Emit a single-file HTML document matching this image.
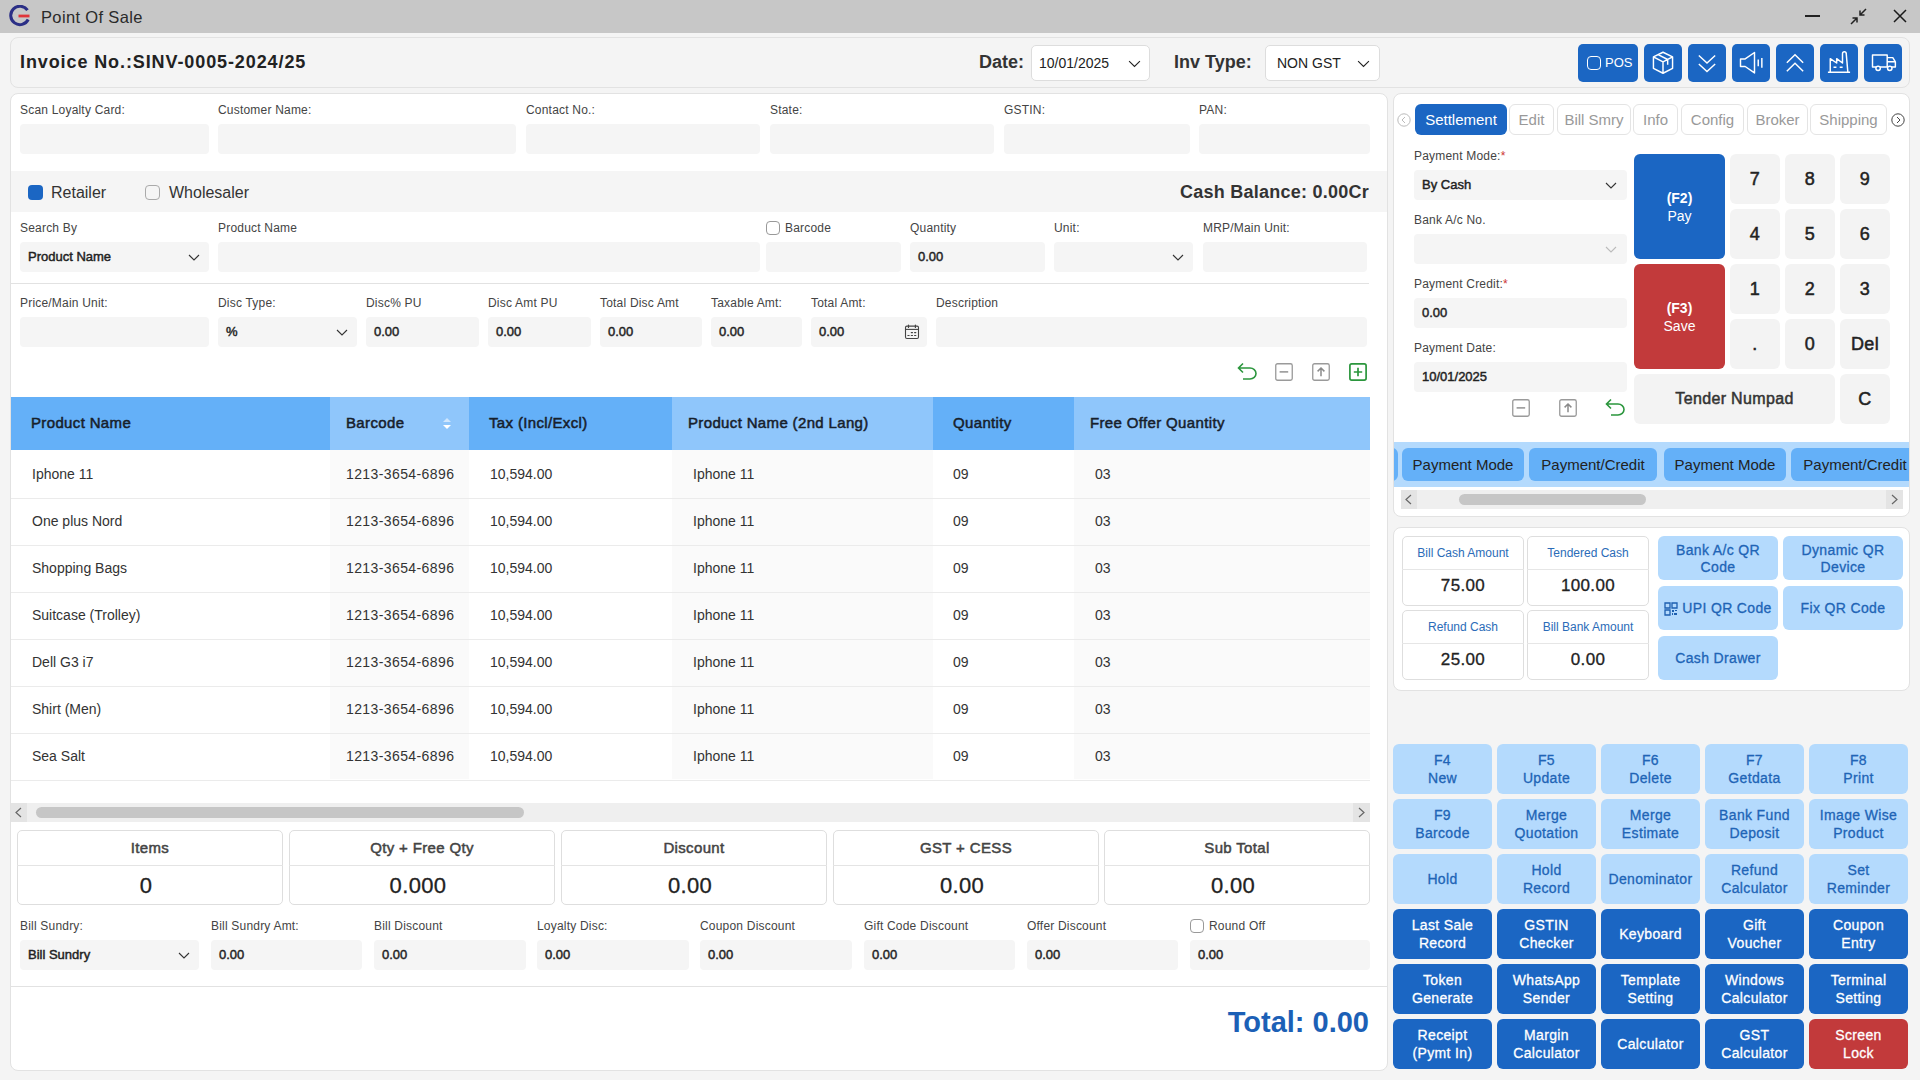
<!DOCTYPE html><html><head><meta charset="utf-8"><style>
html,body{margin:0;padding:0;width:1920px;height:1080px;overflow:hidden;background:#f4f4f4;font-family:"Liberation Sans",sans-serif;}
.t{position:absolute;height:40px;line-height:40px;white-space:nowrap;}
.m{font-weight:400 !important;-webkit-text-stroke:0.3px currentColor;letter-spacing:0.35px;}
.sb{font-weight:400 !important;-webkit-text-stroke:0.5px currentColor;letter-spacing:0.35px;}
.iv{font-weight:400 !important;-webkit-text-stroke:0.45px currentColor;letter-spacing:0;}
.ctr{display:flex;align-items:center;justify-content:center;text-align:center;}
</style></head><body>
<div style="position:absolute;left:0px;top:0px;width:1920px;height:33px;background:#c7c7c7;"></div>
<svg style="position:absolute;left:8px;top:5px" width="24" height="22" viewBox="0 0 24 22">
<path d="M19.5 5.2 A9.2 9.2 0 1 0 20.2 14.5" fill="none" stroke="#2b2f86" stroke-width="3"/>
<path d="M10.5 11 H21.5" stroke="#e0353a" stroke-width="2.8"/></svg>
<div class="t " style="left:41px;top:-3.5px;font-size:16.5px;font-weight:400;color:#2a2a2a;letter-spacing:0.35px;">Point Of Sale</div>
<div style="position:absolute;left:1805px;top:15px;width:15px;height:2px;background:#222;"></div>
<svg style="position:absolute;left:1850px;top:8px" width="17" height="17" viewBox="0 0 17 17">
<path d="M16 1 L10 7 M10 2.5 V7 H14.5 M1 16 L7 10 M2.5 10 H7 V14.5" fill="none" stroke="#222" stroke-width="1.5"/></svg>
<svg style="position:absolute;left:1893px;top:9px" width="14" height="14" viewBox="0 0 14 14">
<path d="M1 1 L13 13 M13 1 L1 13" fill="none" stroke="#1a1a1a" stroke-width="1.5"/></svg>
<div style="position:absolute;left:10px;top:37px;width:1900px;height:51px;box-sizing:border-box;background:#f4f4f4;border:1px solid #e2e2e2;border-radius:8px;"></div>
<div class="t " style="left:20px;top:42px;font-size:18px;font-weight:700;color:#222;letter-spacing:0.9px;">Invoice No.:SINV-0005-2024/25</div>
<div class="t " style="left:979px;top:42px;font-size:18px;font-weight:700;color:#333;">Date:</div>
<div style="position:absolute;left:1031px;top:45px;width:119px;height:36px;box-sizing:border-box;background:#fff;border:1px solid #ddd;border-radius:5px;"></div>
<div class="t " style="left:1039px;top:43px;font-size:14px;font-weight:400;color:#222;">10/01/2025</div>
<svg style="position:absolute;left:1128px;top:60px" width="13" height="7.6" viewBox="0 0 12 7" preserveAspectRatio="none"><path d="M1 1 L6 6 L11 1" fill="none" stroke="#222" stroke-width="1.1" vector-effect="non-scaling-stroke"/></svg>
<div class="t " style="left:1174px;top:42px;font-size:18px;font-weight:700;color:#333;">Inv Type:</div>
<div style="position:absolute;left:1265px;top:45px;width:115px;height:36px;box-sizing:border-box;background:#fff;border:1px solid #ddd;border-radius:5px;"></div>
<div class="t " style="left:1277px;top:43px;font-size:14px;font-weight:400;color:#222;">NON GST</div>
<svg style="position:absolute;left:1357px;top:60px" width="13" height="7.6" viewBox="0 0 12 7" preserveAspectRatio="none"><path d="M1 1 L6 6 L11 1" fill="none" stroke="#222" stroke-width="1.1" vector-effect="non-scaling-stroke"/></svg>
<div style="position:absolute;left:1578px;top:44px;width:60px;height:38px;background:#1b66c3;border-radius:5px;"></div>
<div style="position:absolute;left:1587px;top:56px;width:14px;height:14px;box-sizing:border-box;border:1.5px solid #fff;border-radius:4px;"></div>
<div class="t " style="left:1605px;top:43px;font-size:13px;font-weight:400;color:#fff;">POS</div>
<div style="position:absolute;left:1644px;top:44px;width:38px;height:38px;background:#1b66c3;border-radius:5px;"></div>
<svg style="position:absolute;left:1649px;top:49px" width="28" height="28" viewBox="0 0 24 24"><path d="M12 2.8 L20.2 6.8 V16.6 L12 20.8 L3.8 16.6 V6.8 Z M3.8 6.8 L12 11 L20.2 6.8 M12 11 V20.8 M7.8 4.8 L16 9 V13.5" fill="none" stroke="#fff" stroke-width="1.25" stroke-linejoin="round"/></svg>
<div style="position:absolute;left:1688px;top:44px;width:38px;height:38px;background:#1b66c3;border-radius:5px;"></div>
<svg style="position:absolute;left:1693px;top:49px" width="28" height="28" viewBox="0 0 24 24"><path d="M5 5.5 L12 12 L19 5.5 M5 12.8 L12 19.3 L19 12.8" fill="none" stroke="#fff" stroke-width="1.25"/></svg>
<div style="position:absolute;left:1732px;top:44px;width:38px;height:38px;background:#1b66c3;border-radius:5px;"></div>
<svg style="position:absolute;left:1737px;top:49px" width="28" height="28" viewBox="0 0 24 24"><path d="M3 8.5 H7 L15 3 V20.5 L7 15 H3 Z M18.2 9 V14.8 M21.3 7.8 V16" fill="none" stroke="#fff" stroke-width="1.25" stroke-linejoin="round"/></svg>
<div style="position:absolute;left:1776px;top:44px;width:38px;height:38px;background:#1b66c3;border-radius:5px;"></div>
<svg style="position:absolute;left:1781px;top:49px" width="28" height="28" viewBox="0 0 24 24"><path d="M5 11.8 L12 5 L19 11.8 M5 19 L12 12.2 L19 19" fill="none" stroke="#fff" stroke-width="1.25"/></svg>
<div style="position:absolute;left:1820px;top:44px;width:38px;height:38px;background:#1b66c3;border-radius:5px;"></div>
<svg style="position:absolute;left:1825px;top:49px" width="28" height="28" viewBox="0 0 24 24"><path d="M2.5 20 H21.5 M4.5 20 V8.3 L10 12 V8.3 L15 12 V4 Q15 2.4 16.6 2.4 Q18.2 2.4 18.2 4 L19.6 20 M7.3 15.6 H9.8 M12.6 15.6 H15.1" fill="none" stroke="#fff" stroke-width="1.25" stroke-linejoin="round"/></svg>
<div style="position:absolute;left:1864px;top:44px;width:38px;height:38px;background:#1b66c3;border-radius:5px;"></div>
<svg style="position:absolute;left:1869px;top:49px" width="28" height="28" viewBox="0 0 24 24"><path d="M3 5.2 H15.6 V15.4 H3 Z M15.6 7.4 H20.4 L22.6 11 V15.4 H15.6 M15.6 11 H22.6" fill="none" stroke="#fff" stroke-width="1.25" stroke-linejoin="round"/><circle cx="7.8" cy="16.6" r="1.9" fill="#1b66c3" stroke="#fff" stroke-width="1.25"/><circle cx="17.8" cy="16.6" r="1.9" fill="#1b66c3" stroke="#fff" stroke-width="1.25"/></svg>
<div style="position:absolute;left:10px;top:93px;width:1378px;height:978px;box-sizing:border-box;background:#fff;border:1px solid #e2e2e2;border-radius:8px;"></div>
<div class="t " style="left:20px;top:90px;font-size:12px;font-weight:400;color:#444;letter-spacing:0.2px;">Scan Loyalty Card:</div>
<div style="position:absolute;left:20px;top:124px;width:189px;height:30px;background:#f5f5f5;border-radius:4px;"></div>
<div class="t " style="left:218px;top:90px;font-size:12px;font-weight:400;color:#444;letter-spacing:0.2px;">Customer Name:</div>
<div style="position:absolute;left:218px;top:124px;width:298px;height:30px;background:#f5f5f5;border-radius:4px;"></div>
<div class="t " style="left:526px;top:90px;font-size:12px;font-weight:400;color:#444;letter-spacing:0.2px;">Contact No.:</div>
<div style="position:absolute;left:526px;top:124px;width:234px;height:30px;background:#f5f5f5;border-radius:4px;"></div>
<div class="t " style="left:770px;top:90px;font-size:12px;font-weight:400;color:#444;letter-spacing:0.2px;">State:</div>
<div style="position:absolute;left:770px;top:124px;width:224px;height:30px;background:#f5f5f5;border-radius:4px;"></div>
<div class="t " style="left:1004px;top:90px;font-size:12px;font-weight:400;color:#444;letter-spacing:0.2px;">GSTIN:</div>
<div style="position:absolute;left:1004px;top:124px;width:186px;height:30px;background:#f5f5f5;border-radius:4px;"></div>
<div class="t " style="left:1199px;top:90px;font-size:12px;font-weight:400;color:#444;letter-spacing:0.2px;">PAN:</div>
<div style="position:absolute;left:1199px;top:124px;width:171px;height:30px;background:#f5f5f5;border-radius:4px;"></div>
<div style="position:absolute;left:11px;top:171px;width:1376px;height:41px;background:#f5f5f5;"></div>
<div style="position:absolute;left:28px;top:185px;width:15px;height:15px;background:#1b66c3;border-radius:4px;"></div>
<div class="t " style="left:51px;top:173px;font-size:16px;font-weight:400;color:#333;">Retailer</div>
<div style="position:absolute;left:145px;top:185px;width:15px;height:15px;box-sizing:border-box;background:transparent;border:1px solid #aaa;border-radius:4px;"></div>
<div class="t " style="left:169px;top:173px;font-size:16px;font-weight:400;color:#333;">Wholesaler</div>
<div class="t" style="right:551px;top:172px;font-size:18px;font-weight:700;color:#333;letter-spacing:0.25px;">Cash Balance: 0.00Cr</div>
<div class="t " style="left:20px;top:208px;font-size:12px;font-weight:400;color:#444;letter-spacing:0.2px;">Search By</div>
<div style="position:absolute;left:20px;top:242px;width:189px;height:30px;background:#f5f5f5;border-radius:4px;"></div>
<div class="t iv" style="left:28px;top:237.0px;font-size:13px;font-weight:700;color:#222;">Product Name</div>
<svg style="position:absolute;left:188px;top:254px" width="12" height="7.0" viewBox="0 0 12 7" preserveAspectRatio="none"><path d="M1 1 L6 6 L11 1" fill="none" stroke="#333" stroke-width="1.1" vector-effect="non-scaling-stroke"/></svg>
<div class="t " style="left:218px;top:208px;font-size:12px;font-weight:400;color:#444;letter-spacing:0.2px;">Product Name</div>
<div style="position:absolute;left:218px;top:242px;width:542px;height:30px;background:#f5f5f5;border-radius:4px;"></div>
<div style="position:absolute;left:766px;top:221px;width:14px;height:14px;box-sizing:border-box;background:#fff;border:1px solid #999;border-radius:4px;"></div>
<div class="t " style="left:785px;top:208px;font-size:12px;font-weight:400;color:#444;letter-spacing:0.2px;">Barcode</div>
<div style="position:absolute;left:766px;top:242px;width:135px;height:30px;background:#f5f5f5;border-radius:4px;"></div>
<div class="t " style="left:910px;top:208px;font-size:12px;font-weight:400;color:#444;letter-spacing:0.2px;">Quantity</div>
<div style="position:absolute;left:910px;top:242px;width:135px;height:30px;background:#f5f5f5;border-radius:4px;"></div>
<div class="t iv" style="left:918px;top:237.0px;font-size:13px;font-weight:700;color:#222;">0.00</div>
<div class="t " style="left:1054px;top:208px;font-size:12px;font-weight:400;color:#444;letter-spacing:0.2px;">Unit:</div>
<div style="position:absolute;left:1054px;top:242px;width:139px;height:30px;background:#f5f5f5;border-radius:4px;"></div>
<svg style="position:absolute;left:1172px;top:254px" width="12" height="7.0" viewBox="0 0 12 7" preserveAspectRatio="none"><path d="M1 1 L6 6 L11 1" fill="none" stroke="#333" stroke-width="1.1" vector-effect="non-scaling-stroke"/></svg>
<div class="t " style="left:1203px;top:208px;font-size:12px;font-weight:400;color:#444;letter-spacing:0.2px;">MRP/Main Unit:</div>
<div style="position:absolute;left:1203px;top:242px;width:164px;height:30px;background:#f5f5f5;border-radius:4px;"></div>
<div style="position:absolute;left:10px;top:283px;width:1359px;height:1px;background:#e2e2e2;"></div>
<div class="t " style="left:20px;top:283px;font-size:12px;font-weight:400;color:#444;letter-spacing:0.2px;">Price/Main Unit:</div>
<div style="position:absolute;left:20px;top:317px;width:189px;height:30px;background:#f5f5f5;border-radius:4px;"></div>
<div class="t " style="left:218px;top:283px;font-size:12px;font-weight:400;color:#444;letter-spacing:0.2px;">Disc Type:</div>
<div style="position:absolute;left:218px;top:317px;width:139px;height:30px;background:#f5f5f5;border-radius:4px;"></div>
<div class="t iv" style="left:226px;top:312.0px;font-size:13px;font-weight:700;color:#222;">%</div>
<div class="t " style="left:366px;top:283px;font-size:12px;font-weight:400;color:#444;letter-spacing:0.2px;">Disc% PU</div>
<div style="position:absolute;left:366px;top:317px;width:113px;height:30px;background:#f5f5f5;border-radius:4px;"></div>
<div class="t iv" style="left:374px;top:312.0px;font-size:13px;font-weight:700;color:#222;">0.00</div>
<div class="t " style="left:488px;top:283px;font-size:12px;font-weight:400;color:#444;letter-spacing:0.2px;">Disc Amt PU</div>
<div style="position:absolute;left:488px;top:317px;width:103px;height:30px;background:#f5f5f5;border-radius:4px;"></div>
<div class="t iv" style="left:496px;top:312.0px;font-size:13px;font-weight:700;color:#222;">0.00</div>
<div class="t " style="left:600px;top:283px;font-size:12px;font-weight:400;color:#444;letter-spacing:0.2px;">Total Disc Amt</div>
<div style="position:absolute;left:600px;top:317px;width:102px;height:30px;background:#f5f5f5;border-radius:4px;"></div>
<div class="t iv" style="left:608px;top:312.0px;font-size:13px;font-weight:700;color:#222;">0.00</div>
<div class="t " style="left:711px;top:283px;font-size:12px;font-weight:400;color:#444;letter-spacing:0.2px;">Taxable Amt:</div>
<div style="position:absolute;left:711px;top:317px;width:91px;height:30px;background:#f5f5f5;border-radius:4px;"></div>
<div class="t iv" style="left:719px;top:312.0px;font-size:13px;font-weight:700;color:#222;">0.00</div>
<div class="t " style="left:811px;top:283px;font-size:12px;font-weight:400;color:#444;letter-spacing:0.2px;">Total Amt:</div>
<div style="position:absolute;left:811px;top:317px;width:116px;height:30px;background:#f5f5f5;border-radius:4px;"></div>
<div class="t iv" style="left:819px;top:312.0px;font-size:13px;font-weight:700;color:#222;">0.00</div>
<div class="t " style="left:936px;top:283px;font-size:12px;font-weight:400;color:#444;letter-spacing:0.2px;">Description</div>
<div style="position:absolute;left:936px;top:317px;width:431px;height:30px;background:#f5f5f5;border-radius:4px;"></div>
<svg style="position:absolute;left:336px;top:329px" width="12" height="7.0" viewBox="0 0 12 7" preserveAspectRatio="none"><path d="M1 1 L6 6 L11 1" fill="none" stroke="#333" stroke-width="1.1" vector-effect="non-scaling-stroke"/></svg>
<svg style="position:absolute;left:904px;top:324px" width="16" height="16" viewBox="0 0 16 16">
<rect x="1.5" y="2.1" width="13" height="12.4" rx="1.4" fill="none" stroke="#444" stroke-width="1.1"/>
<path d="M1.5 5.4 H14.5" stroke="#444" stroke-width="1.1"/><path d="M4.5 1 V3.4 M11.4 1 V3.4" stroke="#444" stroke-width="1.2" stroke-linecap="round"/>
<path d="M7.3 8.6 H8.5 M10.6 8.6 H11.8 M3.9 11.5 H5.1 M7.3 11.5 H8.5 M10.6 11.5 H11.8" stroke="#444" stroke-width="1.2" stroke-linecap="round"/></svg>
<svg style="position:absolute;left:1237px;top:362px" width="21" height="18" viewBox="0 0 21 18">
<path d="M6 1.5 L1.5 6 L6 10.5 M1.5 6 H13 A6 5.5 0 0 1 13 17 H6" fill="none" stroke="#2b963d" stroke-width="1.6"/></svg>
<svg style="position:absolute;left:1275px;top:363px" width="18" height="18" viewBox="0 0 18 18">
<rect x="0.75" y="0.75" width="16.5" height="16.5" rx="1.8" fill="none" stroke="#9a9a9a" stroke-width="1.3"/><path d="M4.6 8.9 H13.2" stroke="#8a8a8a" stroke-width="1.4"/></svg>
<svg style="position:absolute;left:1312px;top:363px" width="18" height="18" viewBox="0 0 18 18">
<rect x="0.75" y="0.75" width="16.5" height="16.5" rx="1.8" fill="none" stroke="#9a9a9a" stroke-width="1.3"/><path d="M9 13.2 V5 M5.6 8.4 L9 5 L12.4 8.4" fill="none" stroke="#8a8a8a" stroke-width="1.5"/></svg>
<svg style="position:absolute;left:1349px;top:363px" width="18" height="18" viewBox="0 0 18 18">
<rect x="0.9" y="0.9" width="16.2" height="16.2" rx="1.8" fill="none" stroke="#2b963d" stroke-width="1.7"/><path d="M4.8 9 H13.2 M9 4.8 V13.2" stroke="#2b963d" stroke-width="1.7"/></svg>
<div style="position:absolute;left:11px;top:397px;width:319px;height:53px;background:#64b0f8;"></div>
<div class="t sb" style="left:31px;top:403px;font-size:15px;font-weight:700;color:#17202b;">Product Name</div>
<div style="position:absolute;left:330px;top:397px;width:139px;height:53px;background:#8fc6fb;"></div>
<div class="t sb" style="left:346px;top:403px;font-size:15px;font-weight:700;color:#17202b;">Barcode</div>
<div style="position:absolute;left:469px;top:397px;width:203px;height:53px;background:#64b0f8;"></div>
<div class="t sb" style="left:489px;top:403px;font-size:15px;font-weight:700;color:#17202b;">Tax (Incl/Excl)</div>
<div style="position:absolute;left:672px;top:397px;width:261px;height:53px;background:#8fc6fb;"></div>
<div class="t sb" style="left:688px;top:403px;font-size:15px;font-weight:700;color:#17202b;">Product Name (2nd Lang)</div>
<div style="position:absolute;left:933px;top:397px;width:141px;height:53px;background:#64b0f8;"></div>
<div class="t sb" style="left:953px;top:403px;font-size:15px;font-weight:700;color:#17202b;">Quantity</div>
<div style="position:absolute;left:1074px;top:397px;width:296px;height:53px;background:#8fc6fb;"></div>
<div class="t sb" style="left:1090px;top:403px;font-size:15px;font-weight:700;color:#17202b;">Free Offer Quantity</div>
<svg style="position:absolute;left:442px;top:417px" width="10" height="13" viewBox="0 0 10 13">
<path d="M1 5 L5 1 L9 5 Z" fill="#cfe6fd"/><path d="M1 8 L5 12 L9 8 Z" fill="#fff"/></svg>
<div style="position:absolute;left:11px;top:450px;width:319px;height:47px;background:#fff;"></div>
<div style="position:absolute;left:330px;top:450px;width:139px;height:47px;background:#fafafa;"></div>
<div style="position:absolute;left:469px;top:450px;width:203px;height:47px;background:#fff;"></div>
<div style="position:absolute;left:672px;top:450px;width:261px;height:47px;background:#fafafa;"></div>
<div style="position:absolute;left:933px;top:450px;width:141px;height:47px;background:#fff;"></div>
<div style="position:absolute;left:1074px;top:450px;width:296px;height:47px;background:#fafafa;"></div>
<div class="t " style="left:32px;top:454px;font-size:14px;font-weight:400;color:#333;">Iphone 11</div>
<div class="t " style="left:346px;top:454px;font-size:14px;font-weight:400;color:#333;letter-spacing:0.4px;">1213-3654-6896</div>
<div class="t " style="left:490px;top:454px;font-size:14px;font-weight:400;color:#333;">10,594.00</div>
<div class="t " style="left:693px;top:454px;font-size:14px;font-weight:400;color:#333;">Iphone 11</div>
<div class="t " style="left:953px;top:454px;font-size:14px;font-weight:400;color:#333;">09</div>
<div class="t " style="left:1095px;top:454px;font-size:14px;font-weight:400;color:#333;">03</div>
<div style="position:absolute;left:11px;top:497px;width:319px;height:47px;background:#fff;"></div>
<div style="position:absolute;left:330px;top:497px;width:139px;height:47px;background:#fafafa;"></div>
<div style="position:absolute;left:469px;top:497px;width:203px;height:47px;background:#fff;"></div>
<div style="position:absolute;left:672px;top:497px;width:261px;height:47px;background:#fafafa;"></div>
<div style="position:absolute;left:933px;top:497px;width:141px;height:47px;background:#fff;"></div>
<div style="position:absolute;left:1074px;top:497px;width:296px;height:47px;background:#fafafa;"></div>
<div class="t " style="left:32px;top:501px;font-size:14px;font-weight:400;color:#333;">One plus Nord</div>
<div class="t " style="left:346px;top:501px;font-size:14px;font-weight:400;color:#333;letter-spacing:0.4px;">1213-3654-6896</div>
<div class="t " style="left:490px;top:501px;font-size:14px;font-weight:400;color:#333;">10,594.00</div>
<div class="t " style="left:693px;top:501px;font-size:14px;font-weight:400;color:#333;">Iphone 11</div>
<div class="t " style="left:953px;top:501px;font-size:14px;font-weight:400;color:#333;">09</div>
<div class="t " style="left:1095px;top:501px;font-size:14px;font-weight:400;color:#333;">03</div>
<div style="position:absolute;left:11px;top:544px;width:319px;height:47px;background:#fff;"></div>
<div style="position:absolute;left:330px;top:544px;width:139px;height:47px;background:#fafafa;"></div>
<div style="position:absolute;left:469px;top:544px;width:203px;height:47px;background:#fff;"></div>
<div style="position:absolute;left:672px;top:544px;width:261px;height:47px;background:#fafafa;"></div>
<div style="position:absolute;left:933px;top:544px;width:141px;height:47px;background:#fff;"></div>
<div style="position:absolute;left:1074px;top:544px;width:296px;height:47px;background:#fafafa;"></div>
<div class="t " style="left:32px;top:548px;font-size:14px;font-weight:400;color:#333;">Shopping Bags</div>
<div class="t " style="left:346px;top:548px;font-size:14px;font-weight:400;color:#333;letter-spacing:0.4px;">1213-3654-6896</div>
<div class="t " style="left:490px;top:548px;font-size:14px;font-weight:400;color:#333;">10,594.00</div>
<div class="t " style="left:693px;top:548px;font-size:14px;font-weight:400;color:#333;">Iphone 11</div>
<div class="t " style="left:953px;top:548px;font-size:14px;font-weight:400;color:#333;">09</div>
<div class="t " style="left:1095px;top:548px;font-size:14px;font-weight:400;color:#333;">03</div>
<div style="position:absolute;left:11px;top:591px;width:319px;height:47px;background:#fff;"></div>
<div style="position:absolute;left:330px;top:591px;width:139px;height:47px;background:#fafafa;"></div>
<div style="position:absolute;left:469px;top:591px;width:203px;height:47px;background:#fff;"></div>
<div style="position:absolute;left:672px;top:591px;width:261px;height:47px;background:#fafafa;"></div>
<div style="position:absolute;left:933px;top:591px;width:141px;height:47px;background:#fff;"></div>
<div style="position:absolute;left:1074px;top:591px;width:296px;height:47px;background:#fafafa;"></div>
<div class="t " style="left:32px;top:595px;font-size:14px;font-weight:400;color:#333;">Suitcase (Trolley)</div>
<div class="t " style="left:346px;top:595px;font-size:14px;font-weight:400;color:#333;letter-spacing:0.4px;">1213-3654-6896</div>
<div class="t " style="left:490px;top:595px;font-size:14px;font-weight:400;color:#333;">10,594.00</div>
<div class="t " style="left:693px;top:595px;font-size:14px;font-weight:400;color:#333;">Iphone 11</div>
<div class="t " style="left:953px;top:595px;font-size:14px;font-weight:400;color:#333;">09</div>
<div class="t " style="left:1095px;top:595px;font-size:14px;font-weight:400;color:#333;">03</div>
<div style="position:absolute;left:11px;top:638px;width:319px;height:47px;background:#fff;"></div>
<div style="position:absolute;left:330px;top:638px;width:139px;height:47px;background:#fafafa;"></div>
<div style="position:absolute;left:469px;top:638px;width:203px;height:47px;background:#fff;"></div>
<div style="position:absolute;left:672px;top:638px;width:261px;height:47px;background:#fafafa;"></div>
<div style="position:absolute;left:933px;top:638px;width:141px;height:47px;background:#fff;"></div>
<div style="position:absolute;left:1074px;top:638px;width:296px;height:47px;background:#fafafa;"></div>
<div class="t " style="left:32px;top:642px;font-size:14px;font-weight:400;color:#333;">Dell G3 i7</div>
<div class="t " style="left:346px;top:642px;font-size:14px;font-weight:400;color:#333;letter-spacing:0.4px;">1213-3654-6896</div>
<div class="t " style="left:490px;top:642px;font-size:14px;font-weight:400;color:#333;">10,594.00</div>
<div class="t " style="left:693px;top:642px;font-size:14px;font-weight:400;color:#333;">Iphone 11</div>
<div class="t " style="left:953px;top:642px;font-size:14px;font-weight:400;color:#333;">09</div>
<div class="t " style="left:1095px;top:642px;font-size:14px;font-weight:400;color:#333;">03</div>
<div style="position:absolute;left:11px;top:685px;width:319px;height:47px;background:#fff;"></div>
<div style="position:absolute;left:330px;top:685px;width:139px;height:47px;background:#fafafa;"></div>
<div style="position:absolute;left:469px;top:685px;width:203px;height:47px;background:#fff;"></div>
<div style="position:absolute;left:672px;top:685px;width:261px;height:47px;background:#fafafa;"></div>
<div style="position:absolute;left:933px;top:685px;width:141px;height:47px;background:#fff;"></div>
<div style="position:absolute;left:1074px;top:685px;width:296px;height:47px;background:#fafafa;"></div>
<div class="t " style="left:32px;top:689px;font-size:14px;font-weight:400;color:#333;">Shirt (Men)</div>
<div class="t " style="left:346px;top:689px;font-size:14px;font-weight:400;color:#333;letter-spacing:0.4px;">1213-3654-6896</div>
<div class="t " style="left:490px;top:689px;font-size:14px;font-weight:400;color:#333;">10,594.00</div>
<div class="t " style="left:693px;top:689px;font-size:14px;font-weight:400;color:#333;">Iphone 11</div>
<div class="t " style="left:953px;top:689px;font-size:14px;font-weight:400;color:#333;">09</div>
<div class="t " style="left:1095px;top:689px;font-size:14px;font-weight:400;color:#333;">03</div>
<div style="position:absolute;left:11px;top:732px;width:319px;height:47px;background:#fff;"></div>
<div style="position:absolute;left:330px;top:732px;width:139px;height:47px;background:#fafafa;"></div>
<div style="position:absolute;left:469px;top:732px;width:203px;height:47px;background:#fff;"></div>
<div style="position:absolute;left:672px;top:732px;width:261px;height:47px;background:#fafafa;"></div>
<div style="position:absolute;left:933px;top:732px;width:141px;height:47px;background:#fff;"></div>
<div style="position:absolute;left:1074px;top:732px;width:296px;height:47px;background:#fafafa;"></div>
<div class="t " style="left:32px;top:736px;font-size:14px;font-weight:400;color:#333;">Sea Salt</div>
<div class="t " style="left:346px;top:736px;font-size:14px;font-weight:400;color:#333;letter-spacing:0.4px;">1213-3654-6896</div>
<div class="t " style="left:490px;top:736px;font-size:14px;font-weight:400;color:#333;">10,594.00</div>
<div class="t " style="left:693px;top:736px;font-size:14px;font-weight:400;color:#333;">Iphone 11</div>
<div class="t " style="left:953px;top:736px;font-size:14px;font-weight:400;color:#333;">09</div>
<div class="t " style="left:1095px;top:736px;font-size:14px;font-weight:400;color:#333;">03</div>
<div style="position:absolute;left:11px;top:498px;width:1359px;height:1px;background:#ebebeb;"></div>
<div style="position:absolute;left:11px;top:545px;width:1359px;height:1px;background:#ebebeb;"></div>
<div style="position:absolute;left:11px;top:592px;width:1359px;height:1px;background:#ebebeb;"></div>
<div style="position:absolute;left:11px;top:639px;width:1359px;height:1px;background:#ebebeb;"></div>
<div style="position:absolute;left:11px;top:686px;width:1359px;height:1px;background:#ebebeb;"></div>
<div style="position:absolute;left:11px;top:733px;width:1359px;height:1px;background:#ebebeb;"></div>
<div style="position:absolute;left:11px;top:780px;width:1359px;height:1px;background:#ebebeb;"></div>
<div style="position:absolute;left:11px;top:803px;width:1359px;height:19px;background:#efefef;"></div>
<div style="position:absolute;left:11px;top:803px;width:16px;height:19px;background:#e4e4e4;"></div>
<svg style="position:absolute;left:14px;top:807px" width="9" height="11" viewBox="0 0 9 11"><path d="M7 1 L2 5.5 L7 10" fill="none" stroke="#666" stroke-width="1.2"/></svg>
<div style="position:absolute;left:1353px;top:803px;width:17px;height:19px;background:#e4e4e4;"></div>
<svg style="position:absolute;left:1357px;top:807px" width="9" height="11" viewBox="0 0 9 11"><path d="M2 1 L7 5.5 L2 10" fill="none" stroke="#666" stroke-width="1.2"/></svg>
<div style="position:absolute;left:36px;top:807px;width:488px;height:11px;background:#c6c6c6;border-radius:6px;"></div>
<div style="position:absolute;left:17px;top:830px;width:266px;height:75px;box-sizing:border-box;background:#fff;border:1px solid #dedede;border-radius:5px;"></div>
<div style="position:absolute;left:17px;top:865px;width:266px;height:1px;background:#e4e4e4;"></div>
<div class="t sb" style="left:-150px;width:600px;text-align:center;top:828px;font-size:15px;font-weight:700;color:#444;">Items</div>
<div class="t m" style="left:-154px;width:600px;text-align:center;top:866px;font-size:22px;font-weight:400;color:#222;">0</div>
<div style="position:absolute;left:289px;top:830px;width:266px;height:75px;box-sizing:border-box;background:#fff;border:1px solid #dedede;border-radius:5px;"></div>
<div style="position:absolute;left:289px;top:865px;width:266px;height:1px;background:#e4e4e4;"></div>
<div class="t sb" style="left:122px;width:600px;text-align:center;top:828px;font-size:15px;font-weight:700;color:#444;">Qty + Free Qty</div>
<div class="t m" style="left:118px;width:600px;text-align:center;top:866px;font-size:22px;font-weight:400;color:#222;">0.000</div>
<div style="position:absolute;left:561px;top:830px;width:266px;height:75px;box-sizing:border-box;background:#fff;border:1px solid #dedede;border-radius:5px;"></div>
<div style="position:absolute;left:561px;top:865px;width:266px;height:1px;background:#e4e4e4;"></div>
<div class="t sb" style="left:394px;width:600px;text-align:center;top:828px;font-size:15px;font-weight:700;color:#444;">Discount</div>
<div class="t m" style="left:390px;width:600px;text-align:center;top:866px;font-size:22px;font-weight:400;color:#222;">0.00</div>
<div style="position:absolute;left:833px;top:830px;width:266px;height:75px;box-sizing:border-box;background:#fff;border:1px solid #dedede;border-radius:5px;"></div>
<div style="position:absolute;left:833px;top:865px;width:266px;height:1px;background:#e4e4e4;"></div>
<div class="t sb" style="left:666px;width:600px;text-align:center;top:828px;font-size:15px;font-weight:700;color:#444;">GST + CESS</div>
<div class="t m" style="left:662px;width:600px;text-align:center;top:866px;font-size:22px;font-weight:400;color:#222;">0.00</div>
<div style="position:absolute;left:1104px;top:830px;width:266px;height:75px;box-sizing:border-box;background:#fff;border:1px solid #dedede;border-radius:5px;"></div>
<div style="position:absolute;left:1104px;top:865px;width:266px;height:1px;background:#e4e4e4;"></div>
<div class="t sb" style="left:937px;width:600px;text-align:center;top:828px;font-size:15px;font-weight:700;color:#444;">Sub Total</div>
<div class="t m" style="left:933px;width:600px;text-align:center;top:866px;font-size:22px;font-weight:400;color:#222;">0.00</div>
<div class="t " style="left:20px;top:906px;font-size:12px;font-weight:400;color:#444;letter-spacing:0.2px;">Bill Sundry:</div>
<div style="position:absolute;left:20px;top:940px;width:179px;height:30px;background:#f5f5f5;border-radius:4px;"></div>
<div class="t iv" style="left:28px;top:935.0px;font-size:13px;font-weight:700;color:#222;">Bill Sundry</div>
<div class="t " style="left:211px;top:906px;font-size:12px;font-weight:400;color:#444;letter-spacing:0.2px;">Bill Sundry Amt:</div>
<div style="position:absolute;left:211px;top:940px;width:151px;height:30px;background:#f5f5f5;border-radius:4px;"></div>
<div class="t iv" style="left:219px;top:935.0px;font-size:13px;font-weight:700;color:#222;">0.00</div>
<div class="t " style="left:374px;top:906px;font-size:12px;font-weight:400;color:#444;letter-spacing:0.2px;">Bill Discount</div>
<div style="position:absolute;left:374px;top:940px;width:152px;height:30px;background:#f5f5f5;border-radius:4px;"></div>
<div class="t iv" style="left:382px;top:935.0px;font-size:13px;font-weight:700;color:#222;">0.00</div>
<div class="t " style="left:537px;top:906px;font-size:12px;font-weight:400;color:#444;letter-spacing:0.2px;">Loyalty Disc:</div>
<div style="position:absolute;left:537px;top:940px;width:152px;height:30px;background:#f5f5f5;border-radius:4px;"></div>
<div class="t iv" style="left:545px;top:935.0px;font-size:13px;font-weight:700;color:#222;">0.00</div>
<div class="t " style="left:700px;top:906px;font-size:12px;font-weight:400;color:#444;letter-spacing:0.2px;">Coupon Discount</div>
<div style="position:absolute;left:700px;top:940px;width:152px;height:30px;background:#f5f5f5;border-radius:4px;"></div>
<div class="t iv" style="left:708px;top:935.0px;font-size:13px;font-weight:700;color:#222;">0.00</div>
<div class="t " style="left:864px;top:906px;font-size:12px;font-weight:400;color:#444;letter-spacing:0.2px;">Gift Code Discount</div>
<div style="position:absolute;left:864px;top:940px;width:151px;height:30px;background:#f5f5f5;border-radius:4px;"></div>
<div class="t iv" style="left:872px;top:935.0px;font-size:13px;font-weight:700;color:#222;">0.00</div>
<div class="t " style="left:1027px;top:906px;font-size:12px;font-weight:400;color:#444;letter-spacing:0.2px;">Offer Discount</div>
<div style="position:absolute;left:1027px;top:940px;width:151px;height:30px;background:#f5f5f5;border-radius:4px;"></div>
<div class="t iv" style="left:1035px;top:935.0px;font-size:13px;font-weight:700;color:#222;">0.00</div>
<div class="t " style="left:1209px;top:906px;font-size:12px;font-weight:400;color:#444;letter-spacing:0.2px;">Round Off</div>
<div style="position:absolute;left:1190px;top:940px;width:180px;height:30px;background:#f5f5f5;border-radius:4px;"></div>
<div class="t iv" style="left:1198px;top:935.0px;font-size:13px;font-weight:700;color:#222;">0.00</div>
<svg style="position:absolute;left:178px;top:952px" width="12" height="7.0" viewBox="0 0 12 7" preserveAspectRatio="none"><path d="M1 1 L6 6 L11 1" fill="none" stroke="#333" stroke-width="1.1" vector-effect="non-scaling-stroke"/></svg>
<div style="position:absolute;left:1190px;top:919px;width:14px;height:14px;box-sizing:border-box;background:#fff;border:1px solid #999;border-radius:4px;"></div>
<div style="position:absolute;left:11px;top:986px;width:1376px;height:1px;background:#e2e2e2;"></div>
<div class="t" style="right:551px;top:1002px;font-size:29px;font-weight:700;color:#1c60b6;">Total: 0.00</div>
<div style="position:absolute;left:1393px;top:93px;width:517px;height:424px;box-sizing:border-box;background:#fff;border:1px solid #e2e2e2;border-radius:8px;"></div>
<svg style="position:absolute;left:1397px;top:113px" width="14" height="14" viewBox="0 0 14 14"><circle cx="7" cy="7" r="6.2" fill="none" stroke="#bbb" stroke-width="1"/><path d="M8 4 L5 7 L8 10" fill="none" stroke="#bbb" stroke-width="1"/></svg>
<svg style="position:absolute;left:1891px;top:113px" width="14" height="14" viewBox="0 0 14 14"><circle cx="7" cy="7" r="6.2" fill="none" stroke="#444" stroke-width="1"/><path d="M6 4 L9 7 L6 10" fill="none" stroke="#444" stroke-width="1"/></svg>
<div style="position:absolute;left:1415px;top:104px;width:92px;height:31px;background:#1b66c3;border-radius:6px;"><div class="ctr" style="height:31px;color:#fff;font-size:15px;">Settlement</div></div>
<div style="position:absolute;left:1509px;top:104px;width:45px;height:31px;box-sizing:border-box;background:#fff;border:1px solid #e4e4e4;border-radius:6px;"><div class="ctr" style="height:29px;color:#999;font-size:15px;">Edit</div></div>
<div style="position:absolute;left:1557px;top:104px;width:74px;height:31px;box-sizing:border-box;background:#fff;border:1px solid #e4e4e4;border-radius:6px;"><div class="ctr" style="height:29px;color:#999;font-size:15px;">Bill Smry</div></div>
<div style="position:absolute;left:1633px;top:104px;width:45px;height:31px;box-sizing:border-box;background:#fff;border:1px solid #e4e4e4;border-radius:6px;"><div class="ctr" style="height:29px;color:#999;font-size:15px;">Info</div></div>
<div style="position:absolute;left:1681px;top:104px;width:63px;height:31px;box-sizing:border-box;background:#fff;border:1px solid #e4e4e4;border-radius:6px;"><div class="ctr" style="height:29px;color:#999;font-size:15px;">Config</div></div>
<div style="position:absolute;left:1747px;top:104px;width:61px;height:31px;box-sizing:border-box;background:#fff;border:1px solid #e4e4e4;border-radius:6px;"><div class="ctr" style="height:29px;color:#999;font-size:15px;">Broker</div></div>
<div style="position:absolute;left:1810px;top:104px;width:77px;height:31px;box-sizing:border-box;background:#fff;border:1px solid #e4e4e4;border-radius:6px;"><div class="ctr" style="height:29px;color:#999;font-size:15px;">Shipping</div></div>
<div class="t" style="left:1414px;top:136px;font-size:12px;color:#444;letter-spacing:0.2px;">Payment Mode:<span style="color:#c33">*</span></div>
<div style="position:absolute;left:1414px;top:170px;width:213px;height:30px;background:#f5f5f5;border-radius:4px;"></div>
<div class="t iv" style="left:1422px;top:165.0px;font-size:13px;font-weight:700;color:#222;">By Cash</div>
<svg style="position:absolute;left:1605px;top:182px" width="12" height="7.0" viewBox="0 0 12 7" preserveAspectRatio="none"><path d="M1 1 L6 6 L11 1" fill="none" stroke="#333" stroke-width="1.1" vector-effect="non-scaling-stroke"/></svg>
<div class="t " style="left:1414px;top:200px;font-size:12px;font-weight:400;color:#444;letter-spacing:0.2px;">Bank A/c No.</div>
<div style="position:absolute;left:1414px;top:234px;width:213px;height:30px;background:#f5f5f5;border-radius:4px;"></div>
<svg style="position:absolute;left:1605px;top:246px" width="12" height="7.0" viewBox="0 0 12 7" preserveAspectRatio="none"><path d="M1 1 L6 6 L11 1" fill="none" stroke="#bbb" stroke-width="1.1" vector-effect="non-scaling-stroke"/></svg>
<div class="t" style="left:1414px;top:264px;font-size:12px;color:#444;letter-spacing:0.2px;">Payment Credit:<span style="color:#c33">*</span></div>
<div style="position:absolute;left:1414px;top:298px;width:213px;height:30px;background:#f5f5f5;border-radius:4px;"></div>
<div class="t iv" style="left:1422px;top:293.0px;font-size:13px;font-weight:700;color:#222;">0.00</div>
<div class="t " style="left:1414px;top:328px;font-size:12px;font-weight:400;color:#444;letter-spacing:0.2px;">Payment Date:</div>
<div style="position:absolute;left:1414px;top:362px;width:213px;height:30px;background:#f5f5f5;border-radius:4px;"></div>
<div class="t iv" style="left:1422px;top:357.0px;font-size:13px;font-weight:700;color:#222;">10/01/2025</div>
<svg style="position:absolute;left:1512px;top:399px" width="18" height="18" viewBox="0 0 18 18">
<rect x="0.75" y="0.75" width="16.5" height="16.5" rx="1.8" fill="none" stroke="#9a9a9a" stroke-width="1.3"/><path d="M4.6 8.9 H13.2" stroke="#8a8a8a" stroke-width="1.4"/></svg>
<svg style="position:absolute;left:1559px;top:399px" width="18" height="18" viewBox="0 0 18 18">
<rect x="0.75" y="0.75" width="16.5" height="16.5" rx="1.8" fill="none" stroke="#9a9a9a" stroke-width="1.3"/><path d="M9 13.2 V5 M5.6 8.4 L9 5 L12.4 8.4" fill="none" stroke="#8a8a8a" stroke-width="1.5"/></svg>
<svg style="position:absolute;left:1605px;top:398px" width="21" height="18" viewBox="0 0 21 18">
<path d="M6 1.5 L1.5 6 L6 10.5 M1.5 6 H13 A6 5.5 0 0 1 13 17 H6" fill="none" stroke="#2b963d" stroke-width="1.6"/></svg>
<div style="position:absolute;left:1634px;top:154px;width:91px;height:105px;background:#1b66c3;border-radius:6px;"><div class="ctr" style="height:105px;color:#fff;font-size:14px;line-height:18px;flex-direction:column;"><b>(F2)</b><span>Pay</span></div></div>
<div style="position:absolute;left:1634px;top:264px;width:91px;height:105px;background:#c23a3b;border-radius:6px;"><div class="ctr" style="height:105px;color:#fff;font-size:14px;line-height:18px;flex-direction:column;"><b>(F3)</b><span>Save</span></div></div>
<div style="position:absolute;left:1730px;top:154px;width:50px;height:50px;background:#f3f3f3;border-radius:6px;"><div class="ctr sb" style="height:50px;color:#222;font-size:18px;">7</div></div>
<div style="position:absolute;left:1785px;top:154px;width:50px;height:50px;background:#f3f3f3;border-radius:6px;"><div class="ctr sb" style="height:50px;color:#222;font-size:18px;">8</div></div>
<div style="position:absolute;left:1840px;top:154px;width:50px;height:50px;background:#f3f3f3;border-radius:6px;"><div class="ctr sb" style="height:50px;color:#222;font-size:18px;">9</div></div>
<div style="position:absolute;left:1730px;top:209px;width:50px;height:50px;background:#f3f3f3;border-radius:6px;"><div class="ctr sb" style="height:50px;color:#222;font-size:18px;">4</div></div>
<div style="position:absolute;left:1785px;top:209px;width:50px;height:50px;background:#f3f3f3;border-radius:6px;"><div class="ctr sb" style="height:50px;color:#222;font-size:18px;">5</div></div>
<div style="position:absolute;left:1840px;top:209px;width:50px;height:50px;background:#f3f3f3;border-radius:6px;"><div class="ctr sb" style="height:50px;color:#222;font-size:18px;">6</div></div>
<div style="position:absolute;left:1730px;top:264px;width:50px;height:50px;background:#f3f3f3;border-radius:6px;"><div class="ctr sb" style="height:50px;color:#222;font-size:18px;">1</div></div>
<div style="position:absolute;left:1785px;top:264px;width:50px;height:50px;background:#f3f3f3;border-radius:6px;"><div class="ctr sb" style="height:50px;color:#222;font-size:18px;">2</div></div>
<div style="position:absolute;left:1840px;top:264px;width:50px;height:50px;background:#f3f3f3;border-radius:6px;"><div class="ctr sb" style="height:50px;color:#222;font-size:18px;">3</div></div>
<div style="position:absolute;left:1730px;top:319px;width:50px;height:50px;background:#f3f3f3;border-radius:6px;"><div class="ctr sb" style="height:50px;color:#222;font-size:18px;">.</div></div>
<div style="position:absolute;left:1785px;top:319px;width:50px;height:50px;background:#f3f3f3;border-radius:6px;"><div class="ctr sb" style="height:50px;color:#222;font-size:18px;">0</div></div>
<div style="position:absolute;left:1840px;top:319px;width:50px;height:50px;background:#f3f3f3;border-radius:6px;"><div class="ctr sb" style="height:50px;color:#222;font-size:18px;">Del</div></div>
<div style="position:absolute;left:1634px;top:374px;width:201px;height:50px;background:#f3f3f3;border-radius:6px;"><div class="ctr sb" style="height:50px;color:#333;font-size:16px;">Tender Numpad</div></div>
<div style="position:absolute;left:1840px;top:374px;width:50px;height:50px;background:#f3f3f3;border-radius:6px;"><div class="ctr sb" style="height:50px;color:#222;font-size:18px;">C</div></div>
<div style="position:absolute;left:1394px;top:442px;width:515px;height:45px;background:#b4dafd;overflow:hidden;">
<div style="position:absolute;left:-118px;top:6px;width:122px;height:33px;background:#64b0f8;border-radius:6px;"></div>
<div class="ctr" style="position:absolute;left:8px;top:6px;width:122px;height:33px;background:#64b0f8;border-radius:6px;font-size:15px;color:#222;">Payment Mode</div>
<div class="ctr" style="position:absolute;left:135px;top:6px;width:128px;height:33px;background:#64b0f8;border-radius:6px;font-size:15px;color:#222;">Payment/Credit</div>
<div class="ctr" style="position:absolute;left:270px;top:6px;width:122px;height:33px;background:#64b0f8;border-radius:6px;font-size:15px;color:#222;">Payment Mode</div>
<div class="ctr" style="position:absolute;left:397px;top:6px;width:128px;height:33px;background:#64b0f8;border-radius:6px;font-size:15px;color:#222;">Payment/Credit</div>
</div>
<div style="position:absolute;left:1401px;top:490px;width:502px;height:19px;background:#efefef;"></div>
<div style="position:absolute;left:1401px;top:490px;width:16px;height:19px;background:#e4e4e4;"></div>
<svg style="position:absolute;left:1404px;top:494px" width="9" height="11" viewBox="0 0 9 11"><path d="M7 1 L2 5.5 L7 10" fill="none" stroke="#666" stroke-width="1.2"/></svg>
<div style="position:absolute;left:1886px;top:490px;width:17px;height:19px;background:#e4e4e4;"></div>
<svg style="position:absolute;left:1890px;top:494px" width="9" height="11" viewBox="0 0 9 11"><path d="M2 1 L7 5.5 L2 10" fill="none" stroke="#666" stroke-width="1.2"/></svg>
<div style="position:absolute;left:1459px;top:494px;width:187px;height:11px;background:#c6c6c6;border-radius:6px;"></div>
<div style="position:absolute;left:1393px;top:527px;width:517px;height:164px;box-sizing:border-box;background:#fff;border:1px solid #e2e2e2;border-radius:8px;"></div>
<div style="position:absolute;left:1402px;top:536px;width:122px;height:70px;box-sizing:border-box;background:#fff;border:1px solid #dedede;border-radius:5px;"></div>
<div style="position:absolute;left:1402px;top:569px;width:122px;height:1px;background:#e6e6e6;"></div>
<div class="t " style="left:1163px;width:600px;text-align:center;top:533px;font-size:12px;font-weight:400;color:#2b6cb8;">Bill Cash Amount</div>
<div class="t m" style="left:1163px;width:600px;text-align:center;top:566px;font-size:17px;font-weight:400;color:#222;">75.00</div>
<div style="position:absolute;left:1527px;top:536px;width:122px;height:70px;box-sizing:border-box;background:#fff;border:1px solid #dedede;border-radius:5px;"></div>
<div style="position:absolute;left:1527px;top:569px;width:122px;height:1px;background:#e6e6e6;"></div>
<div class="t " style="left:1288px;width:600px;text-align:center;top:533px;font-size:12px;font-weight:400;color:#2b6cb8;">Tendered Cash</div>
<div class="t m" style="left:1288px;width:600px;text-align:center;top:566px;font-size:17px;font-weight:400;color:#222;">100.00</div>
<div style="position:absolute;left:1402px;top:610px;width:122px;height:70px;box-sizing:border-box;background:#fff;border:1px solid #dedede;border-radius:5px;"></div>
<div style="position:absolute;left:1402px;top:643px;width:122px;height:1px;background:#e6e6e6;"></div>
<div class="t " style="left:1163px;width:600px;text-align:center;top:607px;font-size:12px;font-weight:400;color:#2b6cb8;">Refund Cash</div>
<div class="t m" style="left:1163px;width:600px;text-align:center;top:640px;font-size:17px;font-weight:400;color:#222;">25.00</div>
<div style="position:absolute;left:1527px;top:610px;width:122px;height:70px;box-sizing:border-box;background:#fff;border:1px solid #dedede;border-radius:5px;"></div>
<div style="position:absolute;left:1527px;top:643px;width:122px;height:1px;background:#e6e6e6;"></div>
<div class="t " style="left:1288px;width:600px;text-align:center;top:607px;font-size:12px;font-weight:400;color:#2b6cb8;">Bill Bank Amount</div>
<div class="t m" style="left:1288px;width:600px;text-align:center;top:640px;font-size:17px;font-weight:400;color:#222;">0.00</div>
<div style="position:absolute;left:1658px;top:536px;width:120px;height:44px;background:#b4dafd;border-radius:6px;"><div class="ctr m" style="height:45px;color:#2064b6;font-size:14px;line-height:17px;">Bank A/c QR<br>Code</div></div>
<div style="position:absolute;left:1783px;top:536px;width:120px;height:44px;background:#b4dafd;border-radius:6px;"><div class="ctr m" style="height:45px;color:#2064b6;font-size:14px;line-height:17px;">Dynamic QR<br>Device</div></div>
<div style="position:absolute;left:1658px;top:586px;width:120px;height:44px;background:#b4dafd;border-radius:6px;"><div class="ctr m" style="height:45px;color:#2064b6;font-size:14px;line-height:17px;"><svg width="14" height="14" viewBox="0 0 14 14" style="margin-right:4px"><path d="M1 1h5v5H1zM8 1h5v5H8zM1 8h5v5H1z" fill="none" stroke="#1d5fb0" stroke-width="1.3"/><path d="M8 8h2v2H8zM11 8h2v1h-2zM8 11h1v2H8zM10 11h3v2h-3z" fill="#1d5fb0"/></svg>UPI QR Code</div></div>
<div style="position:absolute;left:1783px;top:586px;width:120px;height:44px;background:#b4dafd;border-radius:6px;"><div class="ctr m" style="height:45px;color:#2064b6;font-size:14px;line-height:17px;">Fix QR Code</div></div>
<div style="position:absolute;left:1658px;top:636px;width:120px;height:44px;background:#b4dafd;border-radius:6px;"><div class="ctr m" style="height:45px;color:#2064b6;font-size:14px;line-height:17px;">Cash Drawer</div></div>
<div style="position:absolute;left:1393px;top:744px;width:99px;height:50px;background:#b4dafd;border-radius:6px;"><div class="ctr m" style="height:50px;color:#2064b6;font-size:14px;line-height:18px;">F4<br>New</div></div>
<div style="position:absolute;left:1497px;top:744px;width:99px;height:50px;background:#b4dafd;border-radius:6px;"><div class="ctr m" style="height:50px;color:#2064b6;font-size:14px;line-height:18px;">F5<br>Update</div></div>
<div style="position:absolute;left:1601px;top:744px;width:99px;height:50px;background:#b4dafd;border-radius:6px;"><div class="ctr m" style="height:50px;color:#2064b6;font-size:14px;line-height:18px;">F6<br>Delete</div></div>
<div style="position:absolute;left:1705px;top:744px;width:99px;height:50px;background:#b4dafd;border-radius:6px;"><div class="ctr m" style="height:50px;color:#2064b6;font-size:14px;line-height:18px;">F7<br>Getdata</div></div>
<div style="position:absolute;left:1809px;top:744px;width:99px;height:50px;background:#b4dafd;border-radius:6px;"><div class="ctr m" style="height:50px;color:#2064b6;font-size:14px;line-height:18px;">F8<br>Print</div></div>
<div style="position:absolute;left:1393px;top:799px;width:99px;height:50px;background:#b4dafd;border-radius:6px;"><div class="ctr m" style="height:50px;color:#2064b6;font-size:14px;line-height:18px;">F9<br>Barcode</div></div>
<div style="position:absolute;left:1497px;top:799px;width:99px;height:50px;background:#b4dafd;border-radius:6px;"><div class="ctr m" style="height:50px;color:#2064b6;font-size:14px;line-height:18px;">Merge<br>Quotation</div></div>
<div style="position:absolute;left:1601px;top:799px;width:99px;height:50px;background:#b4dafd;border-radius:6px;"><div class="ctr m" style="height:50px;color:#2064b6;font-size:14px;line-height:18px;">Merge<br>Estimate</div></div>
<div style="position:absolute;left:1705px;top:799px;width:99px;height:50px;background:#b4dafd;border-radius:6px;"><div class="ctr m" style="height:50px;color:#2064b6;font-size:14px;line-height:18px;">Bank Fund<br>Deposit</div></div>
<div style="position:absolute;left:1809px;top:799px;width:99px;height:50px;background:#b4dafd;border-radius:6px;"><div class="ctr m" style="height:50px;color:#2064b6;font-size:14px;line-height:18px;">Image Wise<br>Product</div></div>
<div style="position:absolute;left:1393px;top:854px;width:99px;height:50px;background:#b4dafd;border-radius:6px;"><div class="ctr m" style="height:50px;color:#2064b6;font-size:14px;line-height:18px;">Hold</div></div>
<div style="position:absolute;left:1497px;top:854px;width:99px;height:50px;background:#b4dafd;border-radius:6px;"><div class="ctr m" style="height:50px;color:#2064b6;font-size:14px;line-height:18px;">Hold<br>Record</div></div>
<div style="position:absolute;left:1601px;top:854px;width:99px;height:50px;background:#b4dafd;border-radius:6px;"><div class="ctr m" style="height:50px;color:#2064b6;font-size:14px;line-height:18px;">Denominator</div></div>
<div style="position:absolute;left:1705px;top:854px;width:99px;height:50px;background:#b4dafd;border-radius:6px;"><div class="ctr m" style="height:50px;color:#2064b6;font-size:14px;line-height:18px;">Refund<br>Calculator</div></div>
<div style="position:absolute;left:1809px;top:854px;width:99px;height:50px;background:#b4dafd;border-radius:6px;"><div class="ctr m" style="height:50px;color:#2064b6;font-size:14px;line-height:18px;">Set<br>Reminder</div></div>
<div style="position:absolute;left:1393px;top:909px;width:99px;height:50px;background:#1b66c3;border-radius:6px;"><div class="ctr m" style="height:50px;color:#fff;font-size:14px;line-height:18px;">Last Sale<br>Record</div></div>
<div style="position:absolute;left:1497px;top:909px;width:99px;height:50px;background:#1b66c3;border-radius:6px;"><div class="ctr m" style="height:50px;color:#fff;font-size:14px;line-height:18px;">GSTIN<br>Checker</div></div>
<div style="position:absolute;left:1601px;top:909px;width:99px;height:50px;background:#1b66c3;border-radius:6px;"><div class="ctr m" style="height:50px;color:#fff;font-size:14px;line-height:18px;">Keyboard</div></div>
<div style="position:absolute;left:1705px;top:909px;width:99px;height:50px;background:#1b66c3;border-radius:6px;"><div class="ctr m" style="height:50px;color:#fff;font-size:14px;line-height:18px;">Gift<br>Voucher</div></div>
<div style="position:absolute;left:1809px;top:909px;width:99px;height:50px;background:#1b66c3;border-radius:6px;"><div class="ctr m" style="height:50px;color:#fff;font-size:14px;line-height:18px;">Coupon<br>Entry</div></div>
<div style="position:absolute;left:1393px;top:964px;width:99px;height:50px;background:#1b66c3;border-radius:6px;"><div class="ctr m" style="height:50px;color:#fff;font-size:14px;line-height:18px;">Token<br>Generate</div></div>
<div style="position:absolute;left:1497px;top:964px;width:99px;height:50px;background:#1b66c3;border-radius:6px;"><div class="ctr m" style="height:50px;color:#fff;font-size:14px;line-height:18px;">WhatsApp<br>Sender</div></div>
<div style="position:absolute;left:1601px;top:964px;width:99px;height:50px;background:#1b66c3;border-radius:6px;"><div class="ctr m" style="height:50px;color:#fff;font-size:14px;line-height:18px;">Template<br>Setting</div></div>
<div style="position:absolute;left:1705px;top:964px;width:99px;height:50px;background:#1b66c3;border-radius:6px;"><div class="ctr m" style="height:50px;color:#fff;font-size:14px;line-height:18px;">Windows<br>Calculator</div></div>
<div style="position:absolute;left:1809px;top:964px;width:99px;height:50px;background:#1b66c3;border-radius:6px;"><div class="ctr m" style="height:50px;color:#fff;font-size:14px;line-height:18px;">Terminal<br>Setting</div></div>
<div style="position:absolute;left:1393px;top:1019px;width:99px;height:50px;background:#1b66c3;border-radius:6px;"><div class="ctr m" style="height:50px;color:#fff;font-size:14px;line-height:18px;">Receipt<br>(Pymt In)</div></div>
<div style="position:absolute;left:1497px;top:1019px;width:99px;height:50px;background:#1b66c3;border-radius:6px;"><div class="ctr m" style="height:50px;color:#fff;font-size:14px;line-height:18px;">Margin<br>Calculator</div></div>
<div style="position:absolute;left:1601px;top:1019px;width:99px;height:50px;background:#1b66c3;border-radius:6px;"><div class="ctr m" style="height:50px;color:#fff;font-size:14px;line-height:18px;">Calculator</div></div>
<div style="position:absolute;left:1705px;top:1019px;width:99px;height:50px;background:#1b66c3;border-radius:6px;"><div class="ctr m" style="height:50px;color:#fff;font-size:14px;line-height:18px;">GST<br>Calculator</div></div>
<div style="position:absolute;left:1809px;top:1019px;width:99px;height:50px;background:#c23a3b;border-radius:6px;"><div class="ctr m" style="height:50px;color:#fff;font-size:14px;line-height:18px;">Screen<br>Lock</div></div>
</body></html>
